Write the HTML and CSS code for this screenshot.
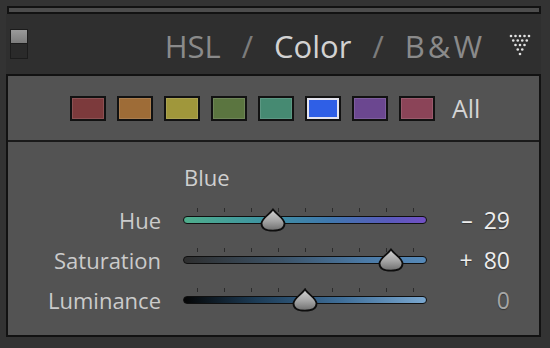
FILE: index.html
```html
<!DOCTYPE html>
<html>
<head>
<meta charset="utf-8">
<link rel="stylesheet" href="styles.css">
</head>
<body>
<div class="wrap">
  <div class="topbar"></div>
  <div class="header">
    <div class="toggle"><span class="toggle-on"></span><span class="toggle-off"></span></div>
    <div class="tabs">
      <span class="tab">HSL</span>
      <span class="sep">/</span>
      <span class="tab active">Color</span>
      <span class="sep">/</span>
      <span class="tab bw">B&amp;W</span>
    </div>
    <svg class="collapse" width="24" height="24" viewBox="0 0 24 24">
      <g fill="#e2e2e2">
        <circle cx="3" cy="3" r="1.3"/><circle cx="7.5" cy="3" r="1.3"/><circle cx="12" cy="3" r="1.3"/><circle cx="16.5" cy="3" r="1.3"/><circle cx="21" cy="3" r="1.3"/>
        <circle cx="5.25" cy="7.5" r="1.3"/><circle cx="9.75" cy="7.5" r="1.3"/><circle cx="14.25" cy="7.5" r="1.3"/><circle cx="18.75" cy="7.5" r="1.3"/>
        <circle cx="7.5" cy="12" r="1.3"/><circle cx="12" cy="12" r="1.3"/><circle cx="16.5" cy="12" r="1.3"/>
        <circle cx="9.75" cy="16.5" r="1.3"/><circle cx="14.25" cy="16.5" r="1.3"/>
        <circle cx="12" cy="21" r="1.3"/>
      </g>
    </svg>
  </div>
  <div class="panel">
    <div class="swatches">
      <span class="swatch red"></span>
      <span class="swatch orange"></span>
      <span class="swatch yellow"></span>
      <span class="swatch green"></span>
      <span class="swatch aqua"></span>
      <span class="swatch blue selected"></span>
      <span class="swatch purple"></span>
      <span class="swatch magenta"></span>
      <span class="all">All</span>
    </div>
    <div class="sliders">
      <div class="heading">Blue</div>

      <div class="label">Hue</div>
      <div class="slider">
        <div class="track hue">
          <div class="ticks"><i></i><i></i><i></i><i></i><i></i><i></i><i></i><i></i><i></i></div>
          <svg class="thumb" style="left:90.7px" width="27" height="24" viewBox="0 0 27 24"><use href="#thumbshape"/></svg>
        </div>
      </div>
      <div class="value">– 29</div>

      <div class="label">Saturation</div>
      <div class="slider">
        <div class="track sat">
          <div class="ticks"><i></i><i></i><i></i><i></i><i></i><i></i><i></i><i></i><i></i></div>
          <svg class="thumb" style="left:208.4px" width="27" height="24" viewBox="0 0 27 24"><use href="#thumbshape"/></svg>
        </div>
      </div>
      <div class="value">+ 80</div>

      <div class="label">Luminance</div>
      <div class="slider">
        <div class="track lum">
          <div class="ticks"><i></i><i></i><i></i><i></i><i></i><i></i><i></i><i></i><i></i></div>
          <svg class="thumb" style="left:122px" width="27" height="24" viewBox="0 0 27 24"><use href="#thumbshape"/></svg>
        </div>
      </div>
      <div class="value dim">0</div>
    </div>
  </div>
</div>
<svg class="defs" width="0" height="0">
  <defs>
    <linearGradient id="thumbgrad" x1="0" y1="0" x2="0" y2="1">
      <stop offset="0" stop-color="#d4d4d4"/>
      <stop offset="0.55" stop-color="#a4a4a4"/>
      <stop offset="1" stop-color="#6e6e6e"/>
    </linearGradient>
    <path id="thumbshape" d="M13.5 1.2 C15.5 5.5 25 10 25 15.5 C25 20.5 21 22.6 13.5 22.6 C6 22.6 2 20.5 2 15.5 C2 10 11.5 5.5 13.5 1.2 Z" fill="url(#thumbgrad)" stroke="#0e0e0e" stroke-width="1.8" stroke-linejoin="round"/>
  </defs>
</svg>
</body>
</html>
```

FILE: styles.css
```css
* { box-sizing: border-box; }

html, body {
  margin: 0;
  padding: 0;
}

body {
  width: 550px;
  height: 348px;
  overflow: hidden;
  background: #333333;
  font-family: "Open Sans", "Liberation Sans", sans-serif;
}

.wrap {
  padding: 6px 9px 0 6px;
}

.topbar {
  height: 8px;
  border: 2px solid #121212;
  background: #4d4d4d;
  margin-left: 1px;
}

.header {
  height: 60px;
  display: flex;
  align-items: center;
  padding-top: 3px;
  padding-right: 9px;
  background: #2f2f2f;
}

.toggle {
  width: 18px;
  height: 30px;
  margin-left: 4px;
  margin-top: -3px;
  display: flex;
  flex-direction: column;
  border: 1px solid #1c1c1c;
}

.toggle-on {
  height: 13px;
  background: linear-gradient(#9a9a9a, #7c7c7c);
}

.toggle-off {
  flex: 1;
  background: #2a2a2a;
  border-top: 1px solid #1c1c1c;
}

.tabs {
  margin-left: auto;
  display: flex;
  align-items: center;
  gap: 21px;
  font-size: 31px;
  line-height: 30px;
  color: #8a8a8a;
}

.tab.active {
  color: #d2d2d2;
}

.tab.bw {
  letter-spacing: 3px;
  margin-right: -3px;
}

.sep {
  color: #7c7c7c;
}

.collapse {
  margin-left: 26px;
  margin-top: -2px;
}

.panel {
  border: 2px solid #121212;
  background: #535353;
  height: 263px;
}

.swatches {
  height: 66px;
  display: flex;
  align-items: center;
  gap: 11px;
  padding-left: 62px;
  border-bottom: 2px solid #1a1a1a;
}

.swatch {
  width: 36px;
  height: 25px;
  border: 2px solid #121212;
  box-shadow: inset 0 0 0 1px rgba(255, 255, 255, 0.12);
}

.red { background: #7c3a3c; }
.orange { background: #9e6c37; }
.yellow { background: #a0973b; }
.green { background: #5b7540; }
.aqua { background: #468a72; }
.purple { background: #6b4790; }
.magenta { background: #8b4458; }

.blue {
  background: #2f5fe6;
}

.swatch.selected {
  box-shadow: inset 0 0 0 2px #e4e4ee;
}

.all {
  margin-left: 6px;
  font-size: 25px;
  line-height: 30px;
  color: #d4d4d4;
  margin-top: -1px;
}

.sliders {
  display: grid;
  grid-template-columns: 175px 244px 83px;
  grid-template-rows: 36px;
  grid-auto-rows: 40px;
  align-items: center;
  padding-top: 22px;
}

.heading {
  grid-column: 2;
  font-size: 22px;
  line-height: 26px;
  color: #cfcfcf;
  padding-left: 1px;
  align-self: start;
}

.label {
  grid-column: 1;
  text-align: right;
  padding-right: 22px;
  font-size: 22px;
  line-height: 26px;
  color: #cbcbcb;
}

.slider {
  grid-column: 2;
  height: 40px;
  display: flex;
  align-items: center;
}

.track {
  position: relative;
  width: 244px;
  height: 8px;
  border: 1.5px solid #101010;
  border-radius: 4px;
}

.track.hue {
  background: linear-gradient(90deg, #4fae8c 0%, #3f96a0 30%, #3f78ae 60%, #5a5abc 85%, #7250c4 100%);
}

.track.sat {
  background: linear-gradient(90deg, #2e2e2e 0%, #3c5266 40%, #4b7aa6 75%, #5689b8 100%);
}

.track.lum {
  background: linear-gradient(90deg, #050505 0%, #1d3c56 30%, #3f6e98 65%, #7aa7cf 100%);
}

.ticks {
  position: absolute;
  left: 12.5px;
  width: 217px;
  top: -9px;
  height: 4px;
  display: flex;
  justify-content: space-between;
}

.ticks i {
  width: 1px;
  height: 4px;
  background: #2c2c2c;
}

.thumb {
  position: absolute;
  top: 50%;
  transform: translate(-50%, -50%);
  margin-left: -1.5px;
}

.value {
  grid-column: 3;
  text-align: right;
  font-size: 23px;
  line-height: 26px;
  word-spacing: 5px;
  color: #ededed;
  text-shadow: 0 1px 1px rgba(0, 0, 0, 0.35);
}

.value.dim {
  color: #a6a6a6;
}

.defs {
  position: absolute;
  width: 0;
  height: 0;
}
```
